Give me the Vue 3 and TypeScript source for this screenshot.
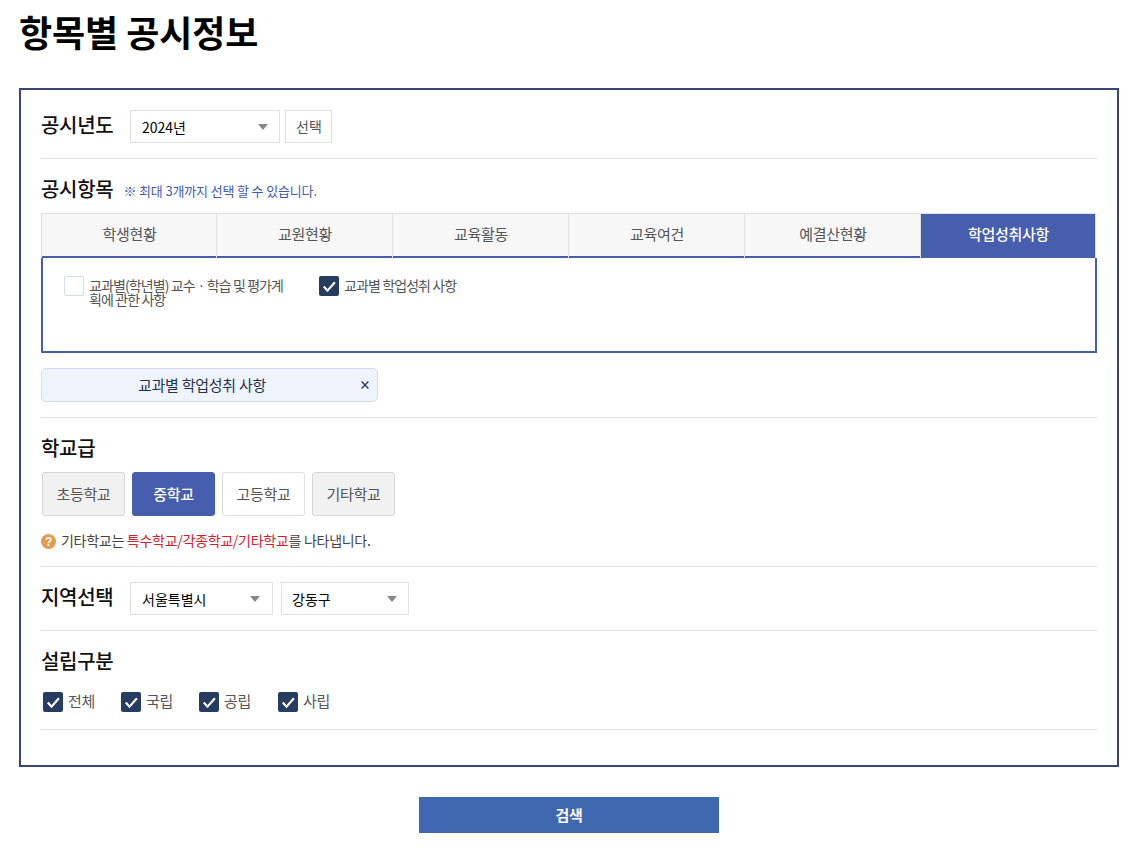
<script setup lang="ts">
const tabs: string[] = ['학생현황', '교원현황', '교육활동', '교육여건', '예결산현황', '학업성취사항']
const levels = [
  { name: '초등학교', cls: 'gray' },
  { name: '중학교', cls: 'on' },
  { name: '고등학교', cls: 'white' },
  { name: '기타학교', cls: 'gray' },
]
const kinds: string[] = ['전체', '국립', '공립', '사립']
</script>

<template>
  <div class="page">
    <h1 class="title">항목별 공시정보</h1>
    <section class="box">
      <div class="row year">
        <h2 class="label">공시년도</h2>
        <div class="select s-year"><span>2024년</span><i class="caret"></i></div>
        <button class="pick">선택</button>
      </div>
      <hr />
      <div class="item-head">
        <h2 class="label">공시항목</h2>
        <span class="hint">※ 최대 3개까지 선택 할 수 있습니다.</span>
      </div>
      <div class="tabs">
        <div v-for="(t, i) in tabs" :key="t" class="tab" :class="{ active: i === 5 }">{{ t }}</div>
      </div>
      <div class="panel">
        <label class="opt first">
          <span class="cb off"></span>
          <span class="opt-text">교과별(학년별) 교수ㆍ학습 및 평가계획에 관한 사항</span>
        </label>
        <label class="opt">
          <span class="cb">
            <svg viewBox="0 0 20 20" width="20" height="20"><path d="M4.8 10.6l3.7 4.1 7.4-8.4" fill="none" stroke="#fff" stroke-width="2.2" /></svg>
          </span>
          <span class="opt-text">교과별 학업성취 사항</span>
        </label>
      </div>
      <div class="tag">
        <span>교과별 학업성취 사항</span>
        <svg class="close" viewBox="0 0 8 8" width="8" height="8"><path d="M.6.6l6.8 6.8M7.4.6L.6 7.4" fill="none" stroke="#263c60" stroke-width="1.4" /></svg>
      </div>
      <hr class="hr-tag" />
      <h2 class="label school">학교급</h2>
      <div class="levels">
        <button v-for="l in levels" :key="l.name" class="level" :class="l.cls">{{ l.name }}</button>
      </div>
      <p class="note">
        <svg viewBox="0 0 15 15" width="15" height="15"><circle cx="7.5" cy="7.5" r="7.5" fill="#e39b4f" /><text x="7.5" y="11.5" text-anchor="middle" class="q">?</text></svg>
        <span class="note-text">기타학교는 <b>특수학교/각종학교/기타학교</b>를 나타냅니다.</span>
      </p>
      <hr />
      <div class="row region">
        <h2 class="label">지역선택</h2>
        <div class="select s-city"><span>서울특별시</span><i class="caret"></i></div>
        <div class="select s-gu"><span>강동구</span><i class="caret"></i></div>
      </div>
      <hr />
      <h2 class="label found">설립구분</h2>
      <div class="kinds">
        <label v-for="k in kinds" :key="k" class="kind">
          <span class="cb">
            <svg viewBox="0 0 20 20" width="20" height="20"><path d="M4.8 10.6l3.7 4.1 7.4-8.4" fill="none" stroke="#fff" stroke-width="2.2" /></svg>
          </span>
          <span class="kind-text">{{ k }}</span>
        </label>
      </div>
      <hr />
    </section>
    <div class="actions"><button class="search">검색</button></div>
  </div>
</template>

<style scoped>
.page {
  width: 1128px;
  height: 852px;
  box-sizing: border-box;
  padding: 0 9px 0 19px;
  font-family: "Noto Sans CJK KR", "Noto Sans", sans-serif;
  color: #555;
  overflow: hidden;
}
.title {
  margin: 0;
  height: 88px;
  font-size: 36px;
  line-height: 63px;
  font-weight: 700;
  color: #000;
  letter-spacing: -0.1px;
}
.box {
  width: 1100px;
  height: 679px;
  box-sizing: border-box;
  border: 2px solid #3a4570;
  padding: 20px 20px 0;
}
hr {
  margin: 0;
  border: 0;
  height: 1px;
  background: #e0e0e0;
}
.label {
  margin: 0;
  font-size: 20px;
  font-weight: 500;
  line-height: 30px;
  color: #111;
  letter-spacing: -0.3px;
}
.row {
  display: flex;
  align-items: center;
  height: 33px;
}
.row .label { width: 89px; padding-bottom: 3px; }
.year { margin-bottom: 15px; }
.select {
  height: 33px;
  box-sizing: border-box;
  border: 1px solid #e0e0e0;
  padding: 0 7px 0 11px;
  display: flex;
  align-items: center;
  justify-content: space-between;
  font-size: 14px;
  color: #000;
}
.caret {
  width: 0;
  height: 0;
  border-left: 5px solid transparent;
  border-right: 5px solid transparent;
  border-top: 6px solid #888;
  margin-right: 4px;
}
.s-city .caret { margin-right: 5px; }
.s-year { width: 150px; }
.s-city { width: 143px; }
.s-gu { width: 128px; margin-left: 8px; padding-left: 10px; }
.pick {
  width: 47px;
  height: 33px;
  margin-left: 5px;
  padding: 0 0 2px 1px;
  border: 1px solid #e0e0e0;
  background: #fff;
  font: inherit;
  font-size: 14px;
  color: #555;
}
.item-head {
  display: flex;
  align-items: center;
  height: 30px;
  margin: 15px 0 9px;
}
.hint {
  margin: 2px 0 0 10px;
  font-size: 13px;
  letter-spacing: -0.15px;
  color: #3f5bb0;
}
.tabs {
  display: flex;
  height: 45px;
  width: 1055px;
}
.tab {
  flex: 0 0 176px;
  box-sizing: border-box;
  background: linear-gradient(#465ead, #465ead) bottom / 100% 2px no-repeat, #f7f7f7;
  border: 1px solid #e0e0e0;
  border-left: 0;
  border-bottom: 0;
  padding-left: 1px;
  font-size: 15px;
  letter-spacing: -0.3px;
  line-height: 40px;
  text-align: center;
  color: #555;
}
.tab:first-child { border-left: 1px solid #e0e0e0; }
.tab.active {
  flex-basis: 175px;
  background: #465ead;
  color: #fff;
  font-weight: 500;
}
.panel {
  height: 95px;
  box-sizing: border-box;
  border: 2px solid #465ead;
  border-top: 0;
  display: flex;
  padding: 18px 21px 0;
}
.opt {
  display: flex;
  align-items: flex-start;
  font-size: 14px;
  line-height: 14px;
  letter-spacing: -0.9px;
  color: #555;
}
.opt.first { width: 255px; }
.opt-text { margin-left: 5px; padding-top: 2px; }
.opt.first .opt-text { width: 200px; }
.cb {
  flex: none;
  width: 20px;
  height: 20px;
  border-radius: 2px;
  background: #263c60;
  display: block;
}
.cb svg { display: block; }
.cb.off {
  box-sizing: border-box;
  border: 1px solid #d5dde9;
  background: #fff;
}
.tag {
  margin-top: 15px;
  width: 337px;
  height: 34px;
  box-sizing: border-box;
  border: 1px solid #d3dbec;
  border-radius: 5px;
  background: #eff3fb;
  display: flex;
  align-items: center;
  position: relative;
  font-size: 15px;
  letter-spacing: -0.25px;
  color: #1f3350;
  justify-content: center;
  padding: 0 15px 2px 0;
}
.close {
  position: absolute;
  right: 8px;
  top: 12px;
}
.hr-tag { margin-top: 15px; }
.school { margin-top: 15px; }
.levels {
  display: flex;
  gap: 7px;
  margin: 9px 0 0 1px;
}
.level {
  width: 83px;
  height: 44px;
  padding: 0 0 2px;
  box-sizing: border-box;
  border: 1px solid #d6d6d6;
  border-radius: 3px;
  font: inherit;
  font-size: 15px;
  letter-spacing: -0.3px;
  color: #555;
  background: #f1f1f1;
}
.level.white { background: #fff; border-color: #e0e0e0; }
.level.on { background: #465ead; border-color: #465ead; color: #fff; font-weight: 500; }
.note {
  margin: 16px 0;
  height: 18px;
  display: flex;
  align-items: center;
  gap: 5px;
  font-size: 14px;
  letter-spacing: -0.28px;
  line-height: 18px;
  color: #444;
}
.note-text { margin-top: -2px; }
.note b { font-weight: 400; color: #d4202a; }
.q { font-size: 12px; font-weight: 700; fill: #fff; font-family: "Liberation Sans", sans-serif; }
.region { margin: 15px 0; }
.found { margin-top: 15px; }
.kinds {
  display: flex;
  margin: 16px 0 15px 2px;
  height: 22px;
}
.kind {
  display: flex;
  align-items: flex-start;
  gap: 5px;
  font-size: 15px;
  letter-spacing: -0.3px;
  line-height: 18px;
  height: 20px;
  color: #555;
  width: 78px;
}
.kind:nth-child(3) { width: 79px; }
.actions {
  display: flex;
  justify-content: center;
  margin-top: 30px;
}
.search {
  width: 300px;
  height: 36px;
  border: 0;
  padding: 0 0 2px;
  background: #3f68b0;
  color: #fff;
  font: inherit;
  font-size: 15px;
  letter-spacing: -0.3px;
  font-weight: 700;
}
</style>
